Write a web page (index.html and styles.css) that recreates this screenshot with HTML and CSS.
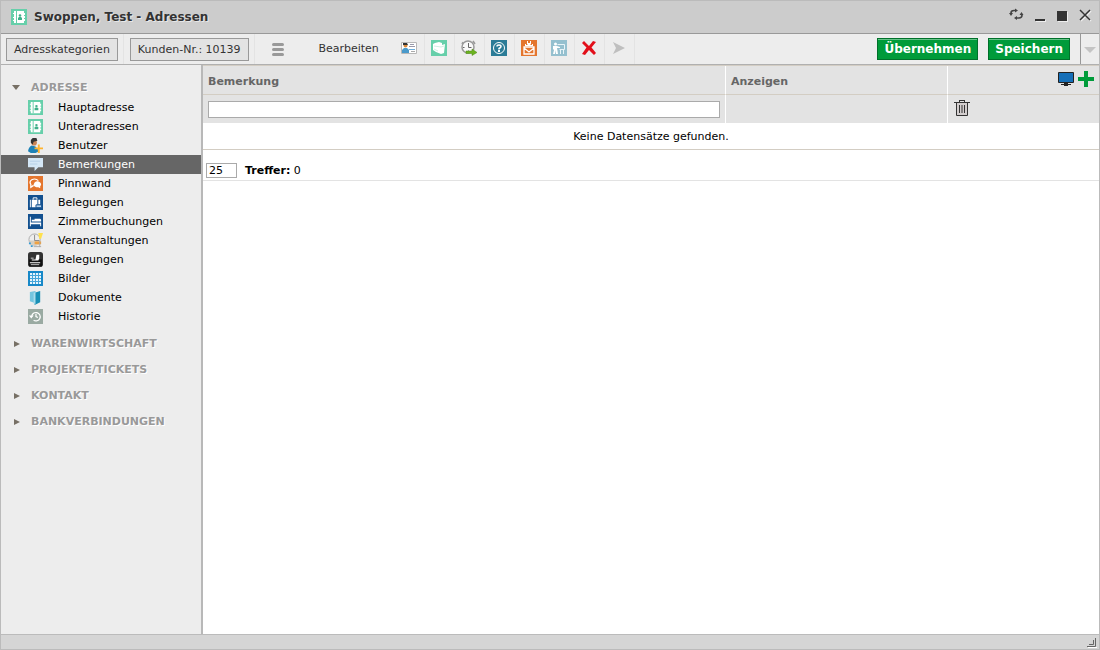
FILE: index.html
```html
<!DOCTYPE html>
<html lang="de">
<head>
<meta charset="utf-8">
<title>Swoppen, Test - Adressen</title>
<link rel="stylesheet" href="styles.css">
</head>
<body>
<svg class="defs" aria-hidden="true">
  <symbol id="book" viewBox="0 0 16 16"><path fill="#66cfaa" d="M0 0h16v16H0z"/><path fill="#fff" d="M3 2h10v2h1v2h-1v1h1v2h-1v1h1v2h-1v2H3v-2H2v-1h1V9H2V8h1V5H2V4h1z"/><path stroke="#66cfaa" d="M5.500 2v12"/><circle cx="9" cy="6.500" r="1.300" fill="#3faf89"/><path fill="#3faf89" d="M7 11V9l1-1h2l1 1v2z"/></symbol>
</svg>
<div class="window">
  <header class="titlebar">
    <svg class="icon"><use href="#book"/></svg>
    <h1 class="title">Swoppen, Test - Adressen</h1>
    <div class="controls">
      <button class="control" aria-label="Aktualisieren"><svg width="16" height="16" viewBox="0 0 16 16" fill="none" stroke="#444" stroke-width="1.600"><path d="M8 4.500H6Q3 4.500 3 7v1M8 12h3q3 0 3-3V8"/><path fill="#444" stroke="none" d="M1 7h4l-2 3zM11.500 9h4l-2-3zM7 2.500l3 2-3 2zM9 10l-3 2 3 2z"/></svg></button>
      <button class="control" aria-label="Minimieren"><svg width="12" height="16" viewBox="0 0 12 16"><path fill="#eee" d="M2 14h10v6H2z"/><path fill="#333" d="M1 13h10v2H1z"/></svg></button>
      <button class="control" aria-label="Maximieren"><svg width="12" height="16" viewBox="0 0 12 16"><path fill="#eee" d="M2 6h10v10H2z"/><path fill="#333" d="M1 5h10v10H1z"/></svg></button>
      <button class="control" aria-label="Schließen"><svg width="14" height="16" viewBox="0 0 14 16" fill="none"><path stroke="#eee" stroke-width="1.500" d="m3 5 10 10M13 5 3 15"/><path stroke="#333" stroke-width="1.500" d="m2 4 10 10M12 4 2 14"/></svg></button>
    </div>
  </header>

  <div class="toolbar">
    <div class="tool-group"><button class="box-button">Adresskategorien</button></div>
    <div class="tool-group"><button class="box-button">Kunden-Nr.: 10139</button></div>
    <button class="menu-button" aria-label="Menü"><svg width="12" height="14" viewBox="0 0 12 14"><path fill="none" stroke="#999" stroke-width="3" stroke-linecap="round" d="M1.500 2.500h9M1.500 7.500h9M1.500 12.500h9"/></svg></button>
    <button class="edit-button">Bearbeiten</button>
    <div class="tools">
      <button class="tool" aria-label="Visitenkarte"><svg class="icon" viewBox="0 0 16 16"><path fill="#fff" stroke="#b8b8b8" d="M.5 2.500h15v11H.5z"/><path fill="#4a9acb" d="M1 13v-3l2-2h3l2 2v3z"/><circle cx="4.500" cy="5.500" r="2" fill="#d98a3c"/><path fill="#333" d="M2 5V3h4l1 2H4z"/><path stroke="#99a" d="M9 4.500h4M8 6.500h6"/><path stroke="#6aaedc" d="M8 9.500h6"/><path stroke="#aaa" d="M10 11.500h4"/></svg></button>
      <button class="tool" aria-label="Notiz"><svg class="icon" viewBox="0 0 16 16"><path fill="#66cfaa" d="M0 0h16v16H0z"/><path fill="#fff" d="m2 4 2-1 4-1 3 1v2l3-1-1 9-3 1-5-2-3-2z"/><path fill="none" stroke="#b9e9d7" stroke-width=".7" d="m3 6 7 1 3-1M3 9l4 2"/></svg></button>
      <button class="tool" aria-label="Zeit"><svg class="icon" viewBox="0 0 16 16"><circle cx="7" cy="7" r="6" fill="#f8f8f8" stroke="#999" stroke-width="1.500"/><path fill="none" stroke="#666" d="M7.500 3v4.500h3M2 7.500h1.500M7.500 12v-1.500"/><path stroke="#999" stroke-width="1.500" d="M2 2 1 4M12 1l2 3"/><path fill="#6cb31f" stroke="#4c8b15" stroke-width=".5" d="M5 11h6V9l5 3.500-5 3v-2H5z"/></svg></button>
      <button class="tool" aria-label="Hilfe"><svg class="icon" viewBox="0 0 16 16"><path fill="#2b7c97" d="M0 0h16v16H0z"/><circle cx="8" cy="8" r="5.500" fill="none" stroke="#fff"/><path fill="none" stroke="#fff" stroke-width="1.500" d="M6 6.500Q6 5 8 5t2 1.500Q10 7.500 8 8.500v1"/><path fill="#fff" d="M7 10h2v2H7z"/></svg></button>
      <button class="tool" aria-label="E-Mail"><svg class="icon" viewBox="0 0 16 16"><path fill="#e4762e" d="M0 0h16v16H0z"/><path fill="none" stroke="#fff" stroke-width="1.300" d="M3 7h10v7H3zM3 8l5 4 5-4"/><path fill="#fff" d="M6 1h1v2h2V1h1v3l-1 1H7L6 4zM4 4h1v1h6V4h1v2H4z"/></svg></button>
      <button class="tool" aria-label="Schulung"><svg class="icon" viewBox="0 0 16 16"><path fill="#95c0cf" d="M0 0h16v16H0z"/><circle cx="4.500" cy="4" r="1.500" fill="#fff"/><path fill="#fff" d="M2 6h4l3 1v1H6l1 6H5l-.5-4L4 14H2l1-4-1-1z"/><path fill="none" stroke="#e8f4f8" d="M6.500 4.500h7v5h-5M9.500 10v4M12.500 10v4"/></svg></button>
      <button class="tool" aria-label="Löschen"><svg class="icon" viewBox="0 0 16 16"><path fill="#e20f1a" d="M1 3 3 1l5 5 4-5 3 1-4.500 5.500L15 13l-2 2-5-5-4 5-3-1 4.500-6.500z"/></svg></button>
      <button class="tool" aria-label="Weiter"><svg class="icon" viewBox="0 0 16 16"><path fill="#bfbfbf" d="m2 2 12 6-12 6 3-6z"/></svg></button>
    </div>
    <div class="actions">
      <button class="save-button">Übernehmen</button>
      <button class="save-button">Speichern</button>
      <button class="more-button" aria-label="Weitere Aktionen"><svg width="12" height="6" viewBox="0 0 12 6"><path fill="#c4c4c4" d="M0 0h12L6 6z"/></svg></button>
    </div>
  </div>

  <div class="content">
    <nav class="sidebar">
      <section>
        <button class="section-title" aria-expanded="true"><svg class="arrow" viewBox="0 0 8 8"><path fill="#777065" d="M0 1h8L4 6z"/></svg>ADRESSE</button>
        <ul class="items">
          <li><a class="item" href="#"><svg class="item-icon"><use href="#book"/></svg>Hauptadresse</a></li>
          <li><a class="item" href="#"><svg class="item-icon"><use href="#book"/></svg>Unteradressen</a></li>
          <li><a class="item" href="#"><svg class="item-icon" viewBox="0 0 16 16"><path fill="#1c82b7" d="M0 14q1-5 4-6l4 1 4 5-4 2H3z"/><circle cx="6.500" cy="5" r="3" fill="#c98454"/><path fill="#333" d="M3 5V2l2-2h4l1 3-4 1-1 3z"/><path stroke="#ffb32e" stroke-width="2" d="M7 11h9M11.500 7v9"/></svg>Benutzer</a></li>
          <li><a class="item selected" href="#" aria-current="page"><svg class="item-icon" viewBox="0 0 16 16"><path fill="#d4e7f6" d="M0 1h16v10h-5l-4 4v-4H0z"/><path stroke="#b5d0e6" d="M2 4.500h11M2 7.500h8"/></svg>Bemerkungen</a></li>
          <li><a class="item" href="#"><svg class="item-icon" viewBox="0 0 16 16"><path fill="#e4762e" d="M0 0h16v16H0z"/><path fill="none" stroke="#fff" stroke-width="1.300" d="M6 10 3 12V9Q1 6 4 4q4-2 7 1"/><path fill="#fff" d="M7 7q3-3 6 0 2 2 0 4v2l-2-1q-5 0-5-3z"/></svg>Pinnwand</a></li>
          <li><a class="item" href="#"><svg class="item-icon" viewBox="0 0 16 16"><path fill="#12508f" d="M0 0h16v16H0z"/><path fill="#fff" d="M2 5h1v8H2zM4 5h6v8H4zM11 5h2v5h-2z"/><path fill="none" stroke="#fff" d="M5.500 5V3h4v2"/><path fill="#b8d2eb" stroke="#12508f" d="M8.500 10.500h6v3h-6z"/></svg>Belegungen</a></li>
          <li><a class="item" href="#"><svg class="item-icon" viewBox="0 0 16 16"><path fill="#12508f" d="M0 0h16v16H0z"/><path fill="#fff" d="M2 3h1v6h11v4h-1v-2H3v2H2zM4 6h3v2H4zM7 5h6l1 1v2H7z"/></svg>Zimmerbuchungen</a></li>
          <li><a class="item" href="#"><svg class="item-icon" viewBox="0 0 16 16"><circle cx="7" cy="7" r="6" fill="#eee" stroke="#aaa"/><path fill="#d6cfc2" d="M2 8h11v5H2z"/><path fill="none" stroke="#888" d="M7 2v6h5"/><path fill="#ffe14d" d="M11 0h5l-2 6h-2z"/><path fill="#efa243" d="M7 9h7v3H7z"/><path fill="#329bd6" d="M1 10h2v2H1zM3 13h2v2H3z"/><path stroke="#aaa" d="M6 14.500h8M12.500 8v7"/></svg>Veranstaltungen</a></li>
          <li><a class="item" href="#"><svg class="item-icon" viewBox="0 0 16 16"><rect width="16" height="16" rx="3" fill="#333"/><path fill="#111" d="M1 8h14v7H1z"/><path fill="#fff" d="M9 3h3v4l-1 2H4V8h4zM3 6h3v1H3zM2 11h11v1H2z"/><path stroke="#ccc" d="M3 13.500h9"/></svg>Belegungen</a></li>
          <li><a class="item" href="#"><svg class="item-icon" viewBox="0 0 15 15"><path fill="#1788c8" d="M0 0h15v15H0z"/><path fill="#e8f5fc" d="M2 2h11v11H2z"/><path stroke="#45a5d9" d="M4.500 2v11M7.500 2v11M10.500 2v11M2 4.500h11M2 7.500h11M2 10.500h11"/></svg>Bilder</a></li>
          <li><a class="item" href="#"><svg class="item-icon" viewBox="0 0 16 16"><path fill="#74c5df" d="m2 2 6-1v13l-6-2z"/><path fill="#188fb5" d="m7 3 6-2v12l-6 3z"/><path fill="#a9dceb" d="m6 3 2-1v13l-2-1z"/></svg>Dokumente</a></li>
          <li><a class="item" href="#"><svg class="item-icon" viewBox="0 0 16 16"><path fill="#9aaaa2" d="M0 0h16v16H0z"/><path fill="none" stroke="#fff" stroke-width="1.300" d="M4 8a4.500 4.500 0 1 1 2 4M8.500 5v3l2 1"/><path fill="#fff" d="M1 7h5l-2.500 3z"/></svg>Historie</a></li>
        </ul>
      </section>
      <button class="section-title" aria-expanded="false"><svg class="arrow" viewBox="0 0 8 8"><path fill="#777065" d="M2 1v6l6-3z"/></svg>WARENWIRTSCHAFT</button>
      <button class="section-title" aria-expanded="false"><svg class="arrow" viewBox="0 0 8 8"><path fill="#777065" d="M2 1v6l6-3z"/></svg>PROJEKTE/TICKETS</button>
      <button class="section-title" aria-expanded="false"><svg class="arrow" viewBox="0 0 8 8"><path fill="#777065" d="M2 1v6l6-3z"/></svg>KONTAKT</button>
      <button class="section-title" aria-expanded="false"><svg class="arrow" viewBox="0 0 8 8"><path fill="#777065" d="M2 1v6l6-3z"/></svg>BANKVERBINDUNGEN</button>
    </nav>

    <main class="main">
      <table class="grid">
        <colgroup><col><col class="col-show"><col class="col-actions"></colgroup>
        <thead>
          <tr class="head-row">
            <th scope="col">Bemerkung</th>
            <th scope="col">Anzeigen</th>
            <td>
              <div class="head-actions">
                <button class="icon-button" aria-label="Ansicht"><svg class="icon" viewBox="0 0 16 16"><path fill="#156fb8" stroke="#222" d="M.5 1.500h15v10H.5z"/><path fill="#222" d="M6 12h4v1h3v1h-3v1H6v-1H3v-1h3z"/></svg></button>
                <button class="icon-button" aria-label="Hinzufügen"><svg class="icon" viewBox="0 0 16 16"><path fill="#009b3a" d="M6 0h4v6h6v4h-6v6H6v-6H0V6h6z"/></svg></button>
              </div>
            </td>
          </tr>
          <tr class="filter-row">
            <td><input class="filter" type="text" aria-label="Bemerkung filtern"></td>
            <td></td>
            <td><button class="icon-button" aria-label="Filter leeren"><svg class="icon" viewBox="0 0 16 16"><path fill="#d2cdcd" stroke="#333" d="M2.500 2.500h11v13h-11z"/><path stroke="#333" d="M0 2.500h16M5 .5h6M5.500 5v8M8 5v8M10.500 5v8M5.500 0v2M10.500 0v2"/></svg></button></td>
          </tr>
        </thead>
        <tbody><tr class="empty-row"><td colspan="3">Keine Datensätze gefunden.</td></tr></tbody>
      </table>
      <div class="pager">
        <input class="page-size" type="text" value="25" aria-label="Treffer pro Seite">
        <span class="hits"><strong>Treffer:</strong> 0</span>
      </div>
    </main>
  </div>
  <footer class="statusbar"><svg width="10" height="10" viewBox="0 0 10 10" fill="none"><path stroke="#fff" d="M1 9.500h9"/><path stroke="#666" d="M0 8.500h8.500V0M2 6.500h4.500V2"/></svg></footer>
</div>
</body>
</html>
```
FILE: styles.css
```css
* { box-sizing: border-box; }
body { margin: 0; font: 11px/14px "DejaVu Sans", Verdana, sans-serif; color: #000; }
button, input { font: inherit; color: inherit; margin: 0; }
button { border: 0; padding: 0; background: none; cursor: pointer; }
svg { display: block; flex: none; }
.defs { display: none; }
.icon { width: 16px; height: 16px; }

.window { display: flex; flex-direction: column; min-height: 100vh; border: 1px solid #bbb; background: #ededed; }

.titlebar { display: flex; align-items: center; height: 33px; padding: 0 7px 0 10px; gap: 7px; background: #ccc; border-bottom: 1px solid #999; }
.title { margin: 0; font: bold 12px/16px "DejaVu Sans", Verdana, sans-serif; color: #333; text-shadow: 1px 1px 0 #e8e8e8; }
.controls { display: flex; align-items: center; gap: 10px; margin-left: auto; padding-bottom: 6px; }

.toolbar { display: flex; align-items: stretch; height: 31px; border-bottom: 1px solid #b0b0b0; color: #333; }
.tool-group { display: flex; align-items: center; padding: 0 5px; border-right: 1px solid #e3e3e3; }
.tool-group + .tool-group { padding-left: 6px; }
.box-button { height: 23px; padding: 2px 7px 0; border: 1px solid #999; background: #e3e3e3; }
.menu-button { margin-left: 17px; }
.edit-button { min-width: 62px; margin-left: 34px; }
.tools { display: flex; margin-left: 15px; }
.tool { display: flex; align-items: center; justify-content: center; width: 30px; padding-bottom: 2px; border-right: 1px solid #e3e3e3; }
.actions { display: flex; align-items: center; gap: 10px; margin-left: auto; }
.save-button { height: 22px; padding: 0 6px; border: 1px solid #00702a; background: #009b3a; box-shadow: inset 0 1px 0 #66c389; color: #fff; font-size: 12px; font-weight: bold; }
.more-button { display: flex; align-items: center; justify-content: center; align-self: stretch; width: 19px; padding-top: 2px; border-left: 1px solid #999; }

.content { display: flex; flex: 1; }
.sidebar { display: flex; flex-direction: column; gap: 4px; width: 202px; padding-top: 11px; border-right: 2px solid #b8b8b8; }
.section-title { display: flex; align-items: center; gap: 11px; width: 100%; height: 22px; padding: 1px 0 0 11px; color: #999; font-weight: bold; text-shadow: 1px 1px 0 #fff; }
.arrow { width: 8px; height: 8px; }
.items { margin: 0; padding: 0 0 2px; list-style: none; }
.item { display: flex; align-items: center; gap: 15px; height: 19px; padding-left: 27px; color: #000; line-height: 15px; text-decoration: none; }
.item-icon { width: 15px; height: 15px; }
.selected { background: #666; color: #fff; }

.main { flex: 1; min-width: 0; background: #fff; }
.grid { width: 100%; table-layout: fixed; border-collapse: separate; border-spacing: 0; border-top: 1px solid #d3cdc3; }
.col-show { width: 222px; }
.col-actions { width: 151px; }
.grid th, .grid td { padding: 0 5px; text-align: left; }
.grid thead th, .grid thead td { background: #e3e3e3; border-right: 1px solid #fff; }
.grid thead tr > :last-child { border-right: 0; }
.grid .head-row > * { height: 29px; border-bottom: 1px solid #d3cdc3; color: #666; }
.grid .head-row th { padding-top: 3px; }
.grid .head-row td { padding-bottom: 2px; }
.filter-row > * { height: 28px; }
.grid .filter-row td:last-child { padding: 0 6px 2px; }
.head-actions { display: flex; justify-content: flex-end; gap: 4px; }
.icon-button { display: block; }
.filter { display: block; width: 100%; height: 17px; padding: 0 2px; border: 1px solid #aaa; background: #fff; }
.grid .empty-row td { height: 27px; padding-top: 2px; border-bottom: 1px solid #d3cdc3; text-align: center; }
.pager { display: flex; align-items: center; gap: 8px; height: 31px; padding: 10px 3px 0; border-bottom: 1px solid #e3e3e3; }
.page-size { width: 31px; height: 15px; padding: 0 2px; border: 1px solid #aaa; background: #fff; }
.hits { padding-top: 2px; }

.statusbar { display: flex; align-items: flex-end; justify-content: flex-end; height: 15px; padding: 0 2px 1px 0; border-top: 1px solid #bbb; background: #d5d5d5; }
```
